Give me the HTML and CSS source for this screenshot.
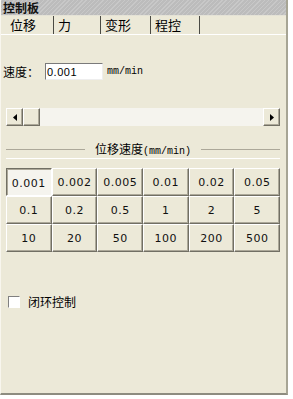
FILE: index.html
```html
<!DOCTYPE html>
<html lang="zh">

<head>
    <meta charset="UTF-8">
    <meta name="viewport" content="width=device-width, initial-scale=1.0">
    <title>控制板</title>
    <link rel="stylesheet" href="styles.css">
</head>

<body>
    <div class="panel">
        <div class="title">控制板</div>

        <!-- 选项卡 -->
        <div class="tabs">
            <div class="tab active">位移</div>
            <div class="tab">力</div>
            <div class="tab">变形</div>
            <div class="tab">程控</div>
        </div>

        <div class="body">
            <div class="speed-row">
                <span class="label">速度：</span>
                <input class="speed-input" type="text" value="0.001">
                <span class="unit">mm/min</span>
            </div>

            <!-- 滚动条 -->
            <div class="scrollbar">
                <div class="sb-btn">
                    <svg width="4" height="7" viewBox="0 0 4 7"><path d="M4 0 L0 3.5 L4 7 Z" fill="#000"/></svg>
                </div>
                <div class="sb-thumb"></div>
                <div class="sb-track"></div>
                <div class="sb-btn">
                    <svg width="4" height="7" viewBox="0 0 4 7"><path d="M0 0 L4 3.5 L0 7 Z" fill="#000"/></svg>
                </div>
            </div>

            <fieldset class="group">
                <legend>位移速度<span class="mono">(mm/min)</span></legend>
            </fieldset>

            <div class="grid">
                <button class="sel">0.001</button>
                <button>0.002</button>
                <button>0.005</button>
                <button>0.01</button>
                <button>0.02</button>
                <button>0.05</button>
                <button>0.1</button>
                <button>0.2</button>
                <button>0.5</button>
                <button>1</button>
                <button>2</button>
                <button>5</button>
                <button>10</button>
                <button>20</button>
                <button>50</button>
                <button>100</button>
                <button>200</button>
                <button>500</button>
            </div>

            <label class="check">
                <span class="box"></span>
                <span>闭环控制</span>
            </label>
        </div>
    </div>
</body>

</html>
```

FILE: styles.css
```css
body {
    margin: 0;
    padding: 0;
    background-color: #fff;
    font-family: "Noto Sans CJK SC", sans-serif;
    font-size: 12px;
    color: #000;
}

.panel {
    width: 288px;
    height: 395px;
    display: flex;
    flex-direction: column;
    background-color: #ece9d8;
    box-sizing: border-box;
    border-left: 1px solid #f8f6ee;
    border-right: 2px solid #a7a595;
    border-bottom: 2px solid #8d8c80;
}

.title {
    height: 15px;
    line-height: 15px;
    padding-left: 2px;
    font-size: 12px;
    font-weight: bold;
    color: #111;
    background: repeating-linear-gradient(135deg, #c8c8c8 0 1px, #bcbcbc 1px 3px);
    border-bottom: 1px solid #e4e2d6;
}

.tabs {
    display: flex;
    height: 18px;
    border-bottom: 1px solid #fff;
}

.tab {
    width: 50px;
    line-height: 17px;
    padding-left: 4px;
    border-right: 1px solid #4a4a44;
    font-size: 13px;
}

.tab.active {
    width: 43px;
    padding-left: 9px;
}

.tab:nth-child(2) {
    width: 42px;
}

.tab:nth-child(3) {
    width: 45px;
}

.tab:nth-child(4) {
    width: 44px;
}

.body {
    flex: 1;
    padding: 0 6px 0 5px;
}

.speed-row {
    display: flex;
    align-items: center;
    margin-top: 28px;
}

.label {
    margin-left: -3px;
    width: 42px;
    font-size: 12px;
}

.speed-input {
    width: 58px;
    height: 17px;
    box-sizing: border-box;
    padding: 0 1px;
    border: 1px solid;
    border-color: #7a7a7a #eee #eee #7a7a7a;
    font-family: "Liberation Sans", sans-serif;
    font-size: 11px;
    letter-spacing: 0.5px;
    background: #fff;
    outline: none;
}

.unit {
    margin-left: 4px;
    font-family: "Liberation Mono", monospace;
    font-size: 10px;
}

.scrollbar {
    display: flex;
    height: 18px;
    margin-top: 28px;
    width: 274px;
}

.sb-btn, .sb-thumb {
    width: 15px;
    border: 1px solid;
    border-color: #fff #716f64 #716f64 #fff;
    background: #ece9d8;
    display: flex;
    align-items: center;
    justify-content: center;
    box-shadow: inset -1px -1px 0 #aca899;
}

.sb-track {
    flex: 1;
    background: #f5f4ee;
}

.group {
    margin: 15px 0 0 0;
    padding: 0;
    width: 274px;
    height: 0;
    border: none;
    border-top: 1px solid #aca899;
    box-shadow: 0 1px 0 #fff;
}

.group legend {
    margin: 0 auto;
    padding: 0 10px;
    font-size: 12px;
    position: relative;
    top: -1px;
}

.mono {
    font-family: "Liberation Mono", monospace;
    font-size: 10px;
}

.grid {
    display: grid;
    grid-template-columns: repeat(6, 1fr);
    width: 274px;
    margin-top: 10px;
}

.grid button {
    height: 28px;
    margin: 0;
    padding: 0;
    font-family: "DejaVu Sans", sans-serif;
    font-size: 11px;
    letter-spacing: 0.5px;
    color: #111;
    background: #ece9d8;
    border: 1px solid;
    border-color: #fff #716f64 #716f64 #fff;
    box-shadow: inset -1px -1px 0 #aca899;
}

.grid button.sel {
    background: #f5f4ee;
    border-color: #716f64 #fff #fff #716f64;
    box-shadow: inset 1px 1px 0 #aca899;
    padding-top: 3px;
}

.check {
    display: flex;
    align-items: center;
    margin-top: 41px;
    font-size: 12px;
}

.box {
    width: 10px;
    height: 10px;
    margin: 0 8px 0 2px;
    background: #fff;
    border: 1px solid;
    border-color: #808080 #fff #fff #808080;
}
```
